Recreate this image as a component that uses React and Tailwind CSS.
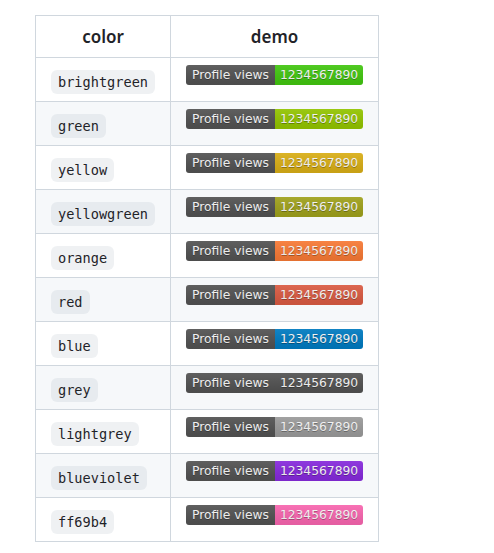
import React from "react";

const rows = [
  ["brightgreen", "#4c1"],
  ["green", "#97ca00"],
  ["yellow", "#dfb317"],
  ["yellowgreen", "#a4a61d"],
  ["orange", "#fe7d37"],
  ["red", "#e05d44"],
  ["blue", "#007ec6"],
  ["grey", "#555555"],
  ["lightgrey", "#9f9f9f"],
  ["blueviolet", "#8a2be2"],
  ["ff69b4", "#ff69b4"],
];

function Badge({ color }) {
  return (
    <div className="relative inline-flex h-[20px] overflow-hidden rounded-[3px] align-top font-['DejaVu_Sans',Verdana,sans-serif] text-[12.3px] leading-[20px] text-white">
      <div className="w-[89px] bg-[#555] text-center [text-shadow:0_1px_0_rgba(1,1,1,0.3)]">Profile views</div>
      <div className="w-[88px] text-center [text-shadow:0_1px_0_rgba(1,1,1,0.3)]" style={{ backgroundColor: color }}>1234567890</div>
      <div className="pointer-events-none absolute inset-0 bg-gradient-to-b from-[rgba(187,187,187,0.1)] to-[rgba(0,0,0,0.1)]" />
    </div>
  );
}

export default function App() {
  return (
    <div className="min-h-[553px] bg-white pl-[35px] pt-[15px] font-['Noto_Sans',sans-serif] text-[#1f2328]">
      <table className="border-collapse">
        <thead>
          <tr>
            <th className="h-[42px] w-[135px] border border-[#d0d7de] text-center text-[17px] font-semibold">color</th>
            <th className="h-[42px] w-[208px] border border-[#d0d7de] text-center text-[17px] font-semibold">demo</th>
          </tr>
        </thead>
        <tbody>
          {rows.map(([name, color], i) => (
            <tr key={name} className={i % 2 === 1 ? "bg-[#f6f8fa]" : "bg-white"}>
              <td className="h-[44px] border border-[#d0d7de] pl-[15px] pt-[11px] text-left align-top">
                <code className="inline-block rounded-[6px] bg-[rgba(175,184,193,0.2)] px-[7px] py-[3px] font-['DejaVu_Sans_Mono',monospace] text-[13.6px] leading-[18px]">{name}</code>
              </td>
              <td className="h-[44px] border border-[#d0d7de] pt-[7px] text-center align-top leading-none">
                <Badge color={color} />
              </td>
            </tr>
          ))}
        </tbody>
      </table>
    </div>
  );
}
